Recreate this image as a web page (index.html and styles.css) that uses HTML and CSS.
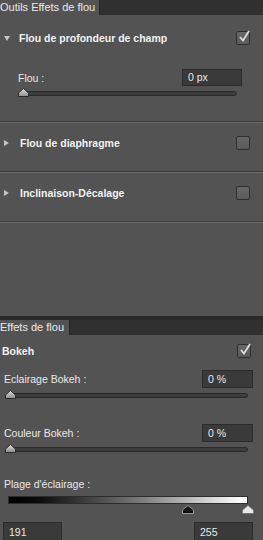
FILE: index.html
```html
<!DOCTYPE html>
<html lang="fr">
<head>
    <meta charset="UTF-8">
    <title>Outils Effets de flou</title>
    <link rel="stylesheet" href="styles.css">
</head>
<body>
    <div class="panel tools">
        <div class="tabbar">
            <div class="tab">Outils Effets de flou</div>
        </div>

        <div class="section open">
            <div class="head">
                <span class="arrow down"></span>
                <span class="title">Flou de profondeur de champ</span>
                <span class="check on">
                    <svg width="16" height="16" viewBox="0 0 16 16"><path d="M4 8 L7 11.5 L13 2" fill="none" stroke="#dcdcdc" stroke-width="1.8"/></svg>
                </span>
            </div>
            <div class="field">
                <span class="label">Flou :</span>
                <span class="input wide">0 px</span>
            </div>
            <div class="slider">
                <svg class="thumb" width="11" height="9" viewBox="0 0 11 9"><path d="M0.5 8.5 V5 L5.5 0.5 L10.5 5 V8.5 Z" fill="url(#g1)" stroke="#2b2b2b"/><defs><linearGradient id="g1" x1="0" y1="0" x2="0" y2="1"><stop offset="0" stop-color="#e0e0e0"/><stop offset="1" stop-color="#8a8a8a"/></linearGradient></defs></svg>
                <div class="track"></div>
            </div>
        </div>

        <div class="section">
            <div class="head">
                <span class="arrow right"></span>
                <span class="title">Flou de diaphragme</span>
                <span class="check"></span>
            </div>
        </div>

        <div class="section">
            <div class="head">
                <span class="arrow right"></span>
                <span class="title">Inclinaison-Décalage</span>
                <span class="check"></span>
            </div>
        </div>
        <div class="section filler"></div>
    </div>

    <div class="panel effects">
        <div class="tabbar">
            <div class="tab small">Effets de flou</div>
        </div>
        <div class="body">
            <div class="head flat">
                <span class="title">Bokeh</span>
                <span class="check on">
                    <svg width="16" height="16" viewBox="0 0 16 16"><path d="M4 8 L7 11.5 L13 2" fill="none" stroke="#dcdcdc" stroke-width="1.8"/></svg>
                </span>
            </div>
            <div class="field">
                <span class="label">Eclairage Bokeh :</span>
                <span class="input">0 %</span>
            </div>
            <div class="slider">
                <svg class="thumb" width="11" height="9" viewBox="0 0 11 9"><path d="M0.5 8.5 V5 L5.5 0.5 L10.5 5 V8.5 Z" fill="url(#g1)" stroke="#2b2b2b"/></svg>
                <div class="track"></div>
            </div>
            <div class="field second">
                <span class="label">Couleur Bokeh :</span>
                <span class="input">0 %</span>
            </div>
            <div class="slider">
                <svg class="thumb" width="11" height="9" viewBox="0 0 11 9"><path d="M0.5 8.5 V5 L5.5 0.5 L10.5 5 V8.5 Z" fill="url(#g1)" stroke="#2b2b2b"/></svg>
                <div class="track"></div>
            </div>
            <div class="label range-label">Plage d'éclairage :</div>
            <div class="gradient"></div>
            <div class="stops">
                <svg class="stop dark" width="12" height="9" viewBox="0 0 12 9"><path d="M0.5 8.5 V5 L6 0.5 L11.5 5 V8.5 Z" fill="#111" stroke="#999"/></svg>
                <svg class="stop light" width="12" height="9" viewBox="0 0 12 9"><path d="M0.5 8.5 V5 L6 0.5 L11.5 5 V8.5 Z" fill="#e8e8e8" stroke="#777"/></svg>
            </div>
            <div class="values">
                <span class="input">191</span>
                <span class="input">255</span>
            </div>
        </div>
    </div>
</body>
</html>
```

FILE: styles.css
```css
body {
    margin: 0;
    width: 263px;
    height: 540px;
    overflow: hidden;
    background-color: #535353;
    font-family: "Liberation Sans", Arial, sans-serif;
    font-size: 10.5px;
    color: #e8e8e8;
}
.panel {
    background-color: #535353;
}
.tools {
    height: 316px;
}
.effects {
    border-top: 4px solid #2a2a2a;
}
.tabbar {
    display: flex;
    height: 15px;
    background-color: #303030;
}
.tab {
    width: 100px;
    background-color: #535353;
    border-right: 1px solid #252525;
    line-height: 15px;
    font-size: 11px;
    box-sizing: border-box;
}
.tab.small {
    width: 70px;
}
.section {
    height: 50px;
    border-top: 1px solid #3c3c3c;
    box-shadow: inset 0 1px 0 #6a6a6a;
    box-sizing: border-box;
    padding-top: 14px;
}
.section.open {
    height: 106px;
    border-top: none;
    box-shadow: none;
    padding-top: 16px;
}
.section.filler {
    height: 95px;
}
.head {
    display: flex;
    align-items: center;
    height: 14px;
    padding-right: 13px;
}
.title {
    flex: 1;
    font-weight: bold;
    color: #f2f2f2;
    padding-left: 6px;
}
.arrow {
    width: 0;
    height: 0;
    margin-left: 4px;
    margin-right: 3px;
}
.arrow.down {
    border-left: 3.5px solid transparent;
    border-right: 3.5px solid transparent;
    border-top: 5px solid #c4c4c4;
}
.arrow.right {
    border-top: 3.5px solid transparent;
    border-bottom: 3.5px solid transparent;
    border-left: 5px solid #c4c4c4;
    margin-right: 5px;
}
.check {
    position: relative;
    width: 12px;
    height: 12px;
    border: 1px solid #2e2e2e;
    border-radius: 2px;
    background: linear-gradient(#676767, #5a5a5a);
}
.check svg {
    position: absolute;
    left: -1px;
    top: -3px;
}
.field {
    display: flex;
    align-items: center;
    justify-content: space-between;
    margin-top: 24px;
    padding-left: 18px;
    padding-right: 21px;
}
.input {
    box-sizing: border-box;
    width: 51px;
    height: 18px;
    line-height: 16px;
    padding-left: 5px;
    background-color: #3a3a3a;
    border: 1px solid #2c2c2c;
}
.input.wide {
    width: 60px;
    height: 17px;
    line-height: 15px;
}
.slider {
    display: flex;
    align-items: center;
    margin-top: 4px;
    padding-left: 18px;
    padding-right: 26px;
}
.thumb {
    position: relative;
    z-index: 1;
    margin-right: -9px;
    margin-top: -2px;
}
.track {
    flex: 1;
    height: 3px;
    background-color: #3d3d3d;
    border: 1px solid #2a2a2a;
    border-radius: 3px;
}
.body {
    padding-top: 9px;
}
.head.flat .title {
    padding-left: 2px;
}
.head.flat {
    padding-right: 12px;
}
.body .field {
    margin-top: 12px;
    padding-left: 4px;
    padding-right: 10px;
}
.body .field.second {
    margin-top: 25px;
}
.body .slider {
    padding-left: 5px;
    padding-right: 15px;
}
.range-label {
    margin-top: 25px;
    padding-left: 4px;
}
.gradient {
    margin: 6px 15px 0 8px;
    height: 6px;
    border: 1px solid #2c2c2c;
    background: linear-gradient(to right, #000 0%, #0a0a0a 12%, #7a7a7a 55%, #fff 98%);
}
.stops {
    display: flex;
    height: 9px;
    padding-top: 1px;
}
.stop.dark {
    margin-left: 182px;
}
.stop.light {
    margin-left: 48px;
}
.values {
    display: flex;
    justify-content: space-between;
    margin-top: 8px;
    padding-left: 3px;
    padding-right: 10px;
}
.values .input {
    width: 59px;
    height: 20px;
    line-height: 18px;
}
```
